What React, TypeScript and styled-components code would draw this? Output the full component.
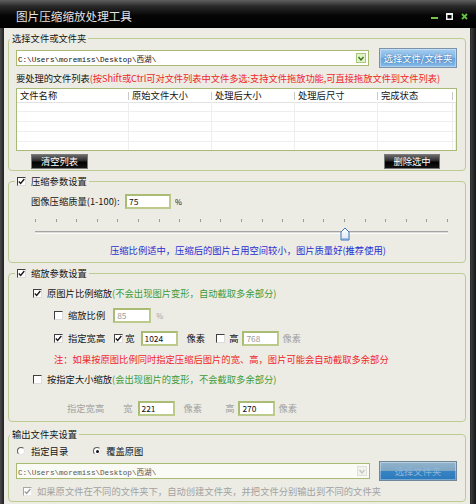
import React from 'react'
import styled, { createGlobalStyle } from 'styled-components'

const GlobalStyle = createGlobalStyle`
  html, body {
    margin: 0;
    padding: 0;
    background: #222;
  }
  body {
    font-family: 'Noto Sans CJK SC', 'Noto Sans', sans-serif;
    font-size: 9.3px;
    color: #141414;
  }
`

const FOLDER = 'C:\\Users\\moremiss\\Desktop\\西湖\\'
const COLUMNS = ['文件名称', '原始文件大小', '处理后大小', '处理后尺寸', '完成状态']
const TICKS = Array.from({ length: 21 }, (_, i) => i)
const QUALITY = 75

const Window = styled.div`
  width: 476px;
  height: 504px;
  display: flex;
  flex-direction: column;
  background: linear-gradient(90deg, #4a4a4a, #202020 4px, #202020 470px, #3c3c3c 471px, #151515);
  overflow: hidden;
`

const TitleBar = styled.div`
  flex: none;
  height: 28px;
  box-sizing: border-box;
  display: flex;
  align-items: center;
  padding: 4px 8px 0 16px;
  background: linear-gradient(#606060 0, #2a2a2a 22%, #060606 55%, #000 100%);
`

const Title = styled.span`
  font-size: 11.6px;
  color: #e4e4e4;
`

const Controls = styled.div`
  margin-left: auto;
  display: flex;
  gap: 8px;
  align-items: center;
`

const Body = styled.div`
  flex: 1;
  margin: 0 6px 0 4px;
  background: #ecece5;
  display: flex;
  flex-direction: column;
`

const Group = styled.fieldset<{ $top: number }>`
  margin: ${(p) => p.$top}px 4px 0;
  padding: 0;
  min-width: 0;
  border: 1px solid #bccb93;
  border-radius: 4px;
`

const Legend = styled.legend<{ $inset: number }>`
  margin-left: ${(p) => p.$inset}px;
  padding: 0 2px;
  line-height: 12px;
  display: flex;
  align-items: center;
  gap: 5px;
`

const Content = styled.div<{ $bottom: number }>`
  padding: 0 8px ${(p) => p.$bottom}px 7px;
  display: flex;
  flex-direction: column;
`

const FileRow = styled.div<{ $mt: number }>`
  margin-top: ${(p) => p.$mt}px;
  height: 20px;
  display: flex;
  align-items: center;
  justify-content: space-between;
`

const Combo = styled.div<{ $w: number; $disabled?: boolean }>`
  width: ${(p) => p.$w}px;
  height: 16px;
  box-sizing: border-box;
  border: 1px solid #a9bb72;
  background: ${(p) => (p.$disabled ? '#fbfbf6' : '#fff')};
  display: flex;
  align-items: center;
  padding: 0 2px 0 1px;
`

const Path = styled.span<{ $disabled?: boolean }>`
  flex: 1;
  font-family: 'Liberation Mono', 'Noto Sans CJK SC', monospace;
  font-size: 7.6px;
  color: ${(p) => (p.$disabled ? '#555' : '#111')};
  white-space: nowrap;
`

const DropArrow = styled.span<{ $disabled?: boolean }>`
  width: 10px;
  height: 10px;
  box-sizing: border-box;
  border: 1px solid ${(p) => (p.$disabled ? '#e0e0da' : '#a7c97c')};
  background: ${(p) => (p.$disabled ? '#f3f3ee' : '#e2f1c8')};
  display: flex;
  align-items: center;
  justify-content: center;
`

const BlueButton = styled.button<{ $disabled?: boolean }>`
  width: 78px;
  height: 20px;
  padding: 0;
  font: inherit;
  color: ${(p) => (p.$disabled ? '#8fb6d8' : '#fff')};
  border: 1px solid ${(p) => (p.$disabled ? '#6f8798' : '#7b93aa')};
  background: ${(p) =>
    p.$disabled
      ? 'linear-gradient(#93b4cc, #7ea6c4 48%, #3683c4 52%, #2b78bb)'
      : 'linear-gradient(#a4cdf0, #80b5e4 50%, #6aa5dc 52%, #86bbe8)'};
  box-shadow: inset 0 0 0 1px rgba(255, 255, 255, 0.35);
  text-shadow: ${(p) => (p.$disabled ? 'none' : '0 0 2px #2b5f96')};
`

const Hint = styled.div`
  margin-top: 4px;
  line-height: 12px;
  white-space: nowrap;
  letter-spacing: -0.08px;
`

const Red = styled.span`
  color: #f0262a;
`

const Green = styled.span`
  color: #3d9b3a;
`

const FileList = styled.div`
  margin-top: 4px;
  height: 63px;
  box-sizing: border-box;
  border: 1px solid #a8b978;
  background: #fff;
  overflow: hidden;
`

const GridRow = styled.div<{ $h: number }>`
  display: grid;
  grid-template-columns: 112px 83px 83px 83px 75px 1fr;
  height: ${(p) => p.$h}px;
`

const HeadCell = styled.span<{ $last?: boolean }>`
  padding-left: 3px;
  line-height: 13px;
  white-space: nowrap;
  border-bottom: 1px solid #e2e2e2;
  background: ${(p) =>
    p.$last ? 'none' : 'linear-gradient(#c9c9c9, #c9c9c9) right center / 1px 8px no-repeat'};
`

const Cell = styled.span`
  border-right: 1px solid #eeeeee;
  border-bottom: 1px solid #eeeeee;
`

const ListButtons = styled.div`
  margin-top: 3px;
  padding: 0 17px 0 15px;
  display: flex;
  justify-content: space-between;
`

const DarkButton = styled.button<{ $w: number }>`
  width: ${(p) => p.$w}px;
  height: 15px;
  padding: 0;
  font: inherit;
  line-height: 13px;
  color: #fff;
  border: 1px solid #7a7a7a;
  background: linear-gradient(#6a6a6a, #262626 48%, #000 52%, #141414);
`

const Row = styled.div<{ $indent: number; $mt: number }>`
  margin-top: ${(p) => p.$mt}px;
  padding-left: ${(p) => p.$indent}px;
  height: 16px;
  display: flex;
  align-items: center;
  white-space: nowrap;
`

const QualityLabel = styled.span`
  width: 94px;
`

const Input = styled.span<{ $w: number; $ml?: number; $disabled?: boolean }>`
  margin-left: ${(p) => p.$ml ?? 0}px;
  width: ${(p) => p.$w}px;
  height: 15px;
  box-sizing: border-box;
  border: 2px solid #bccb8c;
  border-left-color: #aabb74;
  border-top-color: #aabb74;
  background: #fff;
  padding-left: 2px;
  font-size: 8.4px;
  line-height: 11px;
  color: ${(p) => (p.$disabled ? '#9a9a9a' : '#111')};
`

const Unit = styled.span<{ $ml: number; $muted?: boolean; $small?: boolean }>`
  margin-left: ${(p) => p.$ml}px;
  font-size: ${(p) => (p.$small ? '7.5px' : 'inherit')};
  color: ${(p) => (p.$muted ? '#a2a2a2' : 'inherit')};
`

const Slider = styled.div`
  margin: 10px 0 0 19px;
  width: 413px;
`

const Ticks = styled.div`
  height: 3px;
  display: flex;
  justify-content: space-between;
`

const Tick = styled.span`
  width: 1px;
  background: #9a9a9a;
`

const TrackArea = styled.div`
  position: relative;
  height: 20px;
  display: flex;
  align-items: center;
`

const Groove = styled.div`
  flex: 1;
  height: 3px;
  box-sizing: border-box;
  border-top: 1px solid #a4a4a4;
  border-bottom: 1px solid #fbfbfb;
  background: #dcdcd8;
`

const Thumb = styled.svg`
  position: absolute;
  top: 5px;
  margin-left: -5px;
`

const BlueNote = styled.div`
  margin-top: 2px;
  padding-left: 94px;
  line-height: 12px;
  color: #2a2fd0;
`

const CheckLabel = styled.label<{ $ml?: number; $gap?: number; $muted?: boolean }>`
  margin-left: ${(p) => p.$ml ?? 0}px;
  display: inline-flex;
  align-items: center;
  gap: ${(p) => p.$gap ?? 5}px;
  color: ${(p) => (p.$muted ? '#a2a2a2' : 'inherit')};
`

const Box = styled.span<{ $disabled?: boolean }>`
  flex: none;
  width: 9px;
  height: 9px;
  box-sizing: border-box;
  border: 1px solid;
  border-color: ${(p) =>
    p.$disabled ? '#a6a6a6 #ececec #ececec #a6a6a6' : '#3f3f3f #dcdcdc #dcdcdc #3f3f3f'};
  background: #fff;
  display: flex;
  align-items: center;
  justify-content: center;
`

const Dot = styled.span`
  flex: none;
  width: 8px;
  height: 8px;
  box-sizing: border-box;
  border: 1px solid;
  border-color: #5c5c5c #e4e4e4 #e4e4e4 #5c5c5c;
  border-radius: 50%;
  background: #fff;
  display: flex;
  align-items: center;
  justify-content: center;
`

const DotFill = styled.span`
  width: 3px;
  height: 3px;
  border-radius: 50%;
  background: #111;
`

const RedNote = styled.span`
  color: #f0262a;
`

const Muted = styled.span<{ $ml?: number }>`
  margin-left: ${(p) => p.$ml ?? 0}px;
  color: #a2a2a2;
`

const Check = ({ checked, disabled }: { checked: boolean; disabled?: boolean }) => (
  <Box $disabled={disabled}>
    {checked && (
      <svg width="7" height="7" viewBox="0 0 7 7">
        <path d="M0.8 3.4 L2.7 5.4 L6.3 1" fill="none" stroke={disabled ? '#9c9c9c' : '#1a1a1a'} strokeWidth="1.4" />
      </svg>
    )}
  </Box>
)

const Radio = ({ checked }: { checked: boolean }) => <Dot>{checked && <DotFill />}</Dot>

const Chevron = ({ disabled }: { disabled?: boolean }) => (
  <svg width="6" height="5" viewBox="0 0 6 5">
    <path d="M0.5 1 L3 4 L5.5 1" fill="none" stroke={disabled ? '#c4c4c0' : '#2f6f16'} strokeWidth="1.3" />
  </svg>
)

const WindowButtons = () => (
  <Controls>
    <svg width="7" height="7" viewBox="0 0 7 7">
      <rect x="0" y="4" width="7" height="2" fill="#74c24a" />
    </svg>
    <svg width="7" height="7" viewBox="0 0 7 7">
      <rect x="0.75" y="0.75" width="5.5" height="5.5" fill="none" stroke="#f2f2f2" strokeWidth="1.5" />
      <rect x="0" y="0" width="7" height="2" fill="#f2f2f2" />
    </svg>
    <svg width="7" height="7" viewBox="0 0 7 7">
      <path d="M1 1 L6 6 M6 1 L1 6" stroke="#62c23e" strokeWidth="1.8" />
    </svg>
  </Controls>
)

const App: React.FC = () => (
  <Window>
    <GlobalStyle />
    <TitleBar>
      <Title>图片压缩缩放处理工具</Title>
      <WindowButtons />
    </TitleBar>

    <Body>
      <Group $top={4}>
        <Legend $inset={1}>选择文件或文件夹</Legend>
        <Content $bottom={1}>
          <FileRow $mt={4}>
            <Combo $w={353}>
              <Path>{FOLDER}</Path>
              <DropArrow>
                <Chevron />
              </DropArrow>
            </Combo>
            <BlueButton>选择文件/文件夹</BlueButton>
          </FileRow>
          <Hint>
            要处理的文件列表
            <Red>(按Shift或Ctrl可对文件列表中文件多选:支持文件拖放功能,可直接拖放文件到文件列表)</Red>
          </Hint>
          <FileList>
            <GridRow $h={13}>
              {COLUMNS.map((c) => (
                <HeadCell key={c}>{c}</HeadCell>
              ))}
              <HeadCell $last />
            </GridRow>
            {[0, 1, 2, 3, 4].map((r) => (
              <GridRow key={r} $h={10}>
                {[0, 1, 2, 3, 4, 5].map((c) => (
                  <Cell key={c} />
                ))}
              </GridRow>
            ))}
          </FileList>
          <ListButtons>
            <DarkButton $w={57}>清空列表</DarkButton>
            <DarkButton $w={56}>删除选中</DarkButton>
          </ListButtons>
        </Content>
      </Group>

      <Group $top={4}>
        <Legend $inset={6}>
          <Check checked />
          压缩参数设置
        </Legend>
        <Content $bottom={6}>
          <Row $indent={15} $mt={6}>
            <QualityLabel>图像压缩质量(1-100):</QualityLabel>
            <Input $w={46}>{QUALITY}</Input>
            <Unit $ml={4} $small>
              %
            </Unit>
          </Row>
          <Slider>
            <Ticks>
              {TICKS.map((t) => (
                <Tick key={t} />
              ))}
            </Ticks>
            <TrackArea>
              <Groove />
              <Thumb width="10" height="14" viewBox="0 0 10 14" style={{ left: `${QUALITY}%` }}>
                <defs>
                  <linearGradient id="thumbFill" x1="0" y1="0" x2="0" y2="1">
                    <stop offset="0" stopColor="#ffffff" />
                    <stop offset="1" stopColor="#dbe7f4" />
                  </linearGradient>
                </defs>
                <path d="M1 5 L5 1 L9 5 V13 H1 Z" fill="url(#thumbFill)" stroke="#3f72b4" strokeWidth="1" />
                <path d="M2 12 H8" stroke="#5f95d6" strokeWidth="1" />
              </Thumb>
            </TrackArea>
          </Slider>
          <BlueNote>压缩比例适中，压缩后的图片占用空间较小，图片质量好(推荐使用)</BlueNote>
        </Content>
      </Group>

      <Group $top={4}>
        <Legend $inset={6}>
          <Check checked />
          缩放参数设置
        </Legend>
        <Content $bottom={5}>
          <Row $indent={17} $mt={6}>
            <CheckLabel>
              <Check checked />
              <span>
                原图片比例缩放<Green>(不会出现图片变形，自动截取多余部分)</Green>
              </span>
            </CheckLabel>
          </Row>
          <Row $indent={38} $mt={6}>
            <CheckLabel>
              <Check checked={false} />
              缩放比例
            </CheckLabel>
            <Input $w={38} $ml={8} $disabled>
              85
            </Input>
            <Unit $ml={5} $muted $small>
              %
            </Unit>
          </Row>
          <Row $indent={38} $mt={7}>
            <CheckLabel>
              <Check checked />
              指定宽高
            </CheckLabel>
            <CheckLabel $ml={9} $gap={2}>
              <Check checked />宽
            </CheckLabel>
            <Input $w={37} $ml={6}>
              1024
            </Input>
            <Unit $ml={9}>像素</Unit>
            <CheckLabel $ml={11} $gap={4}>
              <Check checked={false} />高
            </CheckLabel>
            <Input $w={37} $ml={4} $disabled>
              768
            </Input>
            <Unit $ml={3} $muted>
              像素
            </Unit>
          </Row>
          <Row $indent={38} $mt={5}>
            <RedNote>注：如果按原图比例同时指定压缩后图片的宽、高，图片可能会自动截取多余部分</RedNote>
          </Row>
          <Row $indent={17} $mt={4}>
            <CheckLabel>
              <Check checked={false} />
              <span>
                按指定大小缩放<Green>(会出现图片的变形，不会截取多余部分)</Green>
              </span>
            </CheckLabel>
          </Row>
          <Row $indent={51} $mt={13}>
            <Muted>指定宽高</Muted>
            <Muted $ml={19}>宽</Muted>
            <Input $w={37} $ml={5}>
              221
            </Input>
            <Unit $ml={9} $muted>
              像素
            </Unit>
            <Muted $ml={23}>高</Muted>
            <Input $w={37} $ml={4}>
              270
            </Input>
            <Unit $ml={3} $muted>
              像素
            </Unit>
          </Row>
        </Content>
      </Group>

      <Group $top={6}>
        <Legend $inset={1}>输出文件夹设置</Legend>
        <Content $bottom={2}>
          <Row $indent={1} $mt={3}>
            <CheckLabel $gap={6}>
              <Radio checked={false} />
              指定目录
            </CheckLabel>
            <CheckLabel $ml={25} $gap={5}>
              <Radio checked />
              覆盖原图
            </CheckLabel>
          </Row>
          <FileRow $mt={2}>
            <Combo $w={354} $disabled>
              <Path $disabled>{FOLDER}</Path>
              <DropArrow $disabled>
                <Chevron disabled />
              </DropArrow>
            </Combo>
            <BlueButton $disabled>选择文件夹</BlueButton>
          </FileRow>
          <Row $indent={7} $mt={2}>
            <CheckLabel $muted>
              <Check checked disabled />
              如果原文件在不同的文件夹下，自动创建文件夹，并把文件分别输出到不同的文件夹
            </CheckLabel>
          </Row>
        </Content>
      </Group>
    </Body>
  </Window>
)

export default App
